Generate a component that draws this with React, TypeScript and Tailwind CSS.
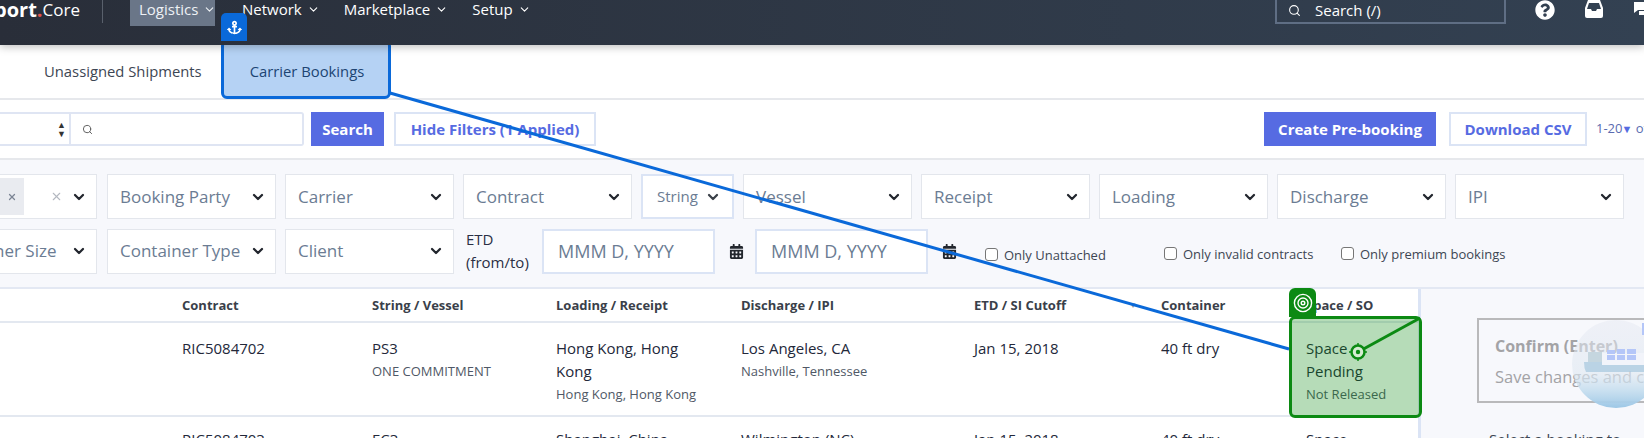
import { ChevronDown, Search, X } from "lucide-react";
import { FaAnchor, FaCalendarAlt, FaQuestionCircle } from "react-icons/fa";

const nav = ["Network", "Marketplace", "Setup"];
const row1 = ["Carrier", "Contract"];
const row1b = ["Vessel", "Receipt", "Loading", "Discharge"];
const cols = "grid grid-cols-[182px_190px_184px_185px_233px_187px_145px_1fr]";

function Select({ label, className = "w-[169px]" }: { label: string; className?: string }) {
  return (
    <div className={`flex h-[45px] shrink-0 items-center justify-between border border-[#e3e6ec] bg-white pl-[12px] pr-[9px] ${className}`}>
      <span className="whitespace-nowrap text-[17px] text-[#6b7c93]">{label}</span>
      <ChevronDown size={16} strokeWidth={3.4} className="shrink-0 text-[#22262e]" />
    </div>
  );
}

function Check({ label, className }: { label: string; className: string }) {
  return (
    <label className={`flex shrink-0 items-center gap-[6px] text-[13px] text-[#3d4653] ${className}`}>
      <span className="-mt-[3px] h-[13px] w-[13px] rounded-[3px] border border-[#767676] bg-white" />
      {label}
    </label>
  );
}

function DateField() {
  return (
    <div className="flex h-[45px] w-[173px] shrink-0 items-center border-2 border-[#dbe4f5] bg-white pl-[14px] text-[18px] text-[#6b7c93]">
      MMM D, YYYY
    </div>
  );
}

export default function App() {
  return (
    <div className="relative h-[438px] w-[1644px] overflow-hidden bg-white font-['Open_Sans',sans-serif]">
      {/* top bar */}
      <header className="relative z-10 flex h-[45px] items-start bg-gradient-to-r from-[#292e39] to-[#334152] shadow-[0_2px_8px_rgba(0,0,0,0.25)]">
        <div className="flex h-[20px] w-[80px] items-center justify-end overflow-hidden whitespace-nowrap text-[17px] text-white">
          <span className="text-[20px] font-bold">Transport</span>
          <span className="text-[20px] font-bold text-[#e5534b]">.</span>
          <span>Core</span>
        </div>
        <div className="ml-[22px] h-[23px] w-px bg-[#59606c]" />
        <div className="ml-[27px] flex h-[26px] w-[85px] gap-[5px] bg-[#6a7688] pl-[9px] text-[15px] leading-[18px] text-[#eef1f5]">
          Logistics <ChevronDown size={13} className="mt-[3px] shrink-0" />
        </div>
        <nav className="ml-[27px] flex h-[18px] items-center gap-[24px] text-[15px] text-white">
          {nav.map((n) => (
            <span key={n} className="flex items-center gap-[5px]">
              {n} <ChevronDown size={13} />
            </span>
          ))}
        </nav>
        <div className="ml-auto flex h-[24px] w-[231px] items-center gap-[14px] border-x-2 border-b-2 border-[#5f6e84] pb-[2px] pl-[11px] text-[15px] text-white">
          <Search size={13} />
          Search (/)
        </div>
        <div className="-mr-[9px] ml-[29px] flex h-[19px] items-center gap-[30px] text-white">
          <FaQuestionCircle size={20} />
          <svg width="18" height="18" viewBox="0 0 18 18" className="-mt-[2px]">
            <path d="M3 0h12l3 8v8a2 2 0 0 1-2 2H2a2 2 0 0 1-2-2V8z" fill="white" />
            <path d="M4 3h10l2 6h-4l-1 2H7L6 9H2z" fill="#334152" />
          </svg>
          <svg width="20" height="18" viewBox="0 0 20 18" className="-mt-[2px]">
            <path d="M1 2h13v8H5l-4 3z" fill="white" />
            <path d="M6 11h9V6h5v9H6z" fill="white" />
          </svg>
        </div>
      </header>

      {/* tabs */}
      <div className="flex h-[55px] items-center border-b-2 border-[#e6e8ec] pl-[44px] text-[14.8px] text-[#3d4653]">
        <span>Unassigned Shipments</span>
        <span className="ml-[48px] text-[#2a3446]">Carrier Bookings</span>
      </div>

      {/* toolbar */}
      <div className="flex h-[60px] items-center border-b-2 border-[#e6e8ec] text-[15px]">
        <div className="flex h-[34px] w-[304px] items-center rounded-r-[3px] border-2 border-l-0 border-[#dfe5f3]">
          <div className="flex w-[71px] justify-end border-r-2 border-[#dfe5f3] pr-[3px] text-[9px] leading-[9px] text-[#333]">
            <span className="flex h-[30px] flex-col justify-center">
              <span>▲</span>
              <span>▼</span>
            </span>
          </div>
          <Search size={11} className="ml-[11px] text-[#555]" />
        </div>
        <button className="ml-[7px] h-[34px] w-[73px] bg-[#566be2] font-bold text-white">Search</button>
        <button className="ml-[10px] h-[34px] w-[202px] border-2 border-[#dbe4f5] font-bold text-[#566be2]">
          Hide Filters (1 Applied)
        </button>
        <button className="ml-auto h-[34px] w-[172px] bg-[#566be2] font-bold text-white">Create Pre-booking</button>
        <button className="ml-[13px] h-[34px] w-[138px] border-2 border-[#dbe4f5] font-bold text-[#566be2]">
          Download CSV
        </button>
        <span className="ml-[9px] w-[48px] shrink-0 whitespace-nowrap text-[13px] text-[#5a6bb0]">
          1-20<span className="-ml-[1px] text-[11px] text-[#566be2]">▼</span> of
        </span>
      </div>

      {/* filters */}
      <div className="flex h-[129px] flex-col gap-[9px] border-b-2 border-[#e3e8f3] bg-[#f7f8fc] pt-[14px]">
        <div className="flex gap-[9px]">
          <div className="relative mr-[1px] flex h-[45px] w-[97px] shrink-0 items-center justify-end gap-[8px] border border-l-0 border-[#e3e6ec] bg-white pr-[9px]">
            <span className="absolute left-0 top-[3px] flex h-[37px] w-[24px] items-center justify-center bg-[#e9ebf0] text-[#7b8494]">
              <X size={10} strokeWidth={3} />
            </span>
            <X size={13} className="text-[#b4b8c0]" />
            <ChevronDown size={16} strokeWidth={3.4} className="text-[#22262e]" />
          </div>
          <Select label="Booking Party" />
          {row1.map((l) => (
            <Select key={l} label={l} />
          ))}
          <div className="flex h-[45px] w-[93px] shrink-0 items-center justify-between border-2 border-[#dbe4f5] bg-white pl-[14px] pr-[11px]">
            <span className="text-[15px] text-[#6b7c93]">String</span>
            <ChevronDown size={16} strokeWidth={3.4} className="text-[#3a4048]" />
          </div>
          {row1b.map((l) => (
            <Select key={l} label={l} />
          ))}
          <Select label="IPI" />
        </div>
        <div className="flex items-center">
          <div className="flex h-[45px] w-[97px] shrink-0 items-center justify-between overflow-hidden border border-l-0 border-[#e3e6ec] bg-white pr-[9px]">
            <span className="-ml-[6px] whitespace-nowrap text-[17px] text-[#6b7c93]">ner Size</span>
            <ChevronDown size={16} strokeWidth={3.4} className="text-[#22262e]" />
          </div>
          <Select label="Container Type" className="ml-[10px] w-[169px]" />
          <Select label="Client" className="ml-[9px] w-[169px]" />
          <div className="ml-[12px] w-[76px] shrink-0 text-[15px] leading-[23px] text-[#2a2f45]">
            ETD
            <br />
            (from/to)
          </div>
          <DateField />
          <FaCalendarAlt size={15} className="ml-[14px] shrink-0 text-[#23272e]" />
          <div className="ml-[11px]">
            <DateField />
          </div>
          <FaCalendarAlt size={15} className="ml-[14px] shrink-0 text-[#23272e]" />
          <Check label="Only Unattached" className="ml-[28px] mt-[9px] w-[179px]" />
          <Check label="Only invalid contracts" className="mt-[7px] w-[177px]" />
          <Check label="Only premium bookings" className="mt-[7px]" />
        </div>
      </div>

      {/* table */}
      <div className="flex">
        <div className="w-[1418px] shrink-0">
          <div className={`${cols} h-[34px] items-center border-b-2 border-[#e3e8f0] pt-[1px] text-[13px] font-bold text-[#3a3f4a]`}>
            <span />
            <span>Contract</span>
            <span>String / Vessel</span>
            <span>Loading / Receipt</span>
            <span>Discharge / IPI</span>
            <span className="relative">
              ETD / SI Cutoff
              <span className="absolute left-[155px] top-[3px] text-[8px] text-[#8a8f99]">▼</span>
            </span>
            <span>Container</span>
            <span>Space / SO</span>
          </div>
          <div className={`${cols} h-[94px] border-b-2 border-[#e3e8f0] pt-[14px] text-[15px] leading-[23px] text-[#23283a]`}>
            <span />
            <span>RIC5084702</span>
            <div>
              PS3
              <div className="text-[13px] text-[#4f5866]">ONE COMMITMENT</div>
            </div>
            <div className="pr-[30px]">
              Hong Kong, Hong Kong
              <div className="whitespace-nowrap text-[13px] text-[#4f5866]">Hong Kong, Hong Kong</div>
            </div>
            <div>
              Los Angeles, CA
              <div className="text-[13px] text-[#4f5866]">Nashville, Tennessee</div>
            </div>
            <span>Jan 15, 2018</span>
            <span>40 ft dry</span>
            <div className="pr-[30px]">
              Space Pending
              <div className="whitespace-nowrap text-[13px] text-[#4f5866]">Not Released</div>
            </div>
          </div>
          <div className={`${cols} pt-[11px] text-[15px] leading-[23px] text-[#23283a]`}>
            <span />
            <span>RIC5084703</span>
            <span>EC3</span>
            <span>Shanghai, China</span>
            <span>Wilmington (NC)</span>
            <span>Jan 15, 2018</span>
            <span>40 ft dry</span>
            <span>Space</span>
          </div>
        </div>
        <aside className="h-[150px] flex-1 border-l-[3px] border-[#dbe4f5] bg-[#f7f8fc] pl-[56px] pt-[29px]">
          <div className="h-[85px] w-[200px] whitespace-nowrap border-2 border-[#b9b9bb] px-[16px] pt-[14px] text-[#a3a3a6]">
            <div className="text-[16px] font-bold">Confirm (Enter)</div>
            <div className="mt-[7px] text-[16.5px]">Save changes and c</div>
          </div>
          <div className="mt-[25px] whitespace-nowrap pl-[12px] text-[15px] text-[#3d4653]">Select a booking to</div>
        </aside>
      </div>

      {/* annotation overlay */}
      <div className="absolute left-[221px] top-[40px] h-[59px] w-[170px] rounded-[6px] border-[3px] border-[#0a69d9] bg-[#0a69d9]/30" />
      <div className="absolute left-[221px] top-[13px] z-20 flex h-[28px] w-[26px] items-center justify-center rounded-t-[5px] bg-[#0a69d9] text-white">
        <FaAnchor size={15} />
      </div>
      <div className="absolute left-[1289px] top-[316px] h-[102px] w-[133px] rounded-[6px] border-[3px] border-[#0c8a13] bg-[#0c8a13]/30" />
      <div className="absolute left-[1289px] top-[288px] flex h-[29px] w-[27px] items-center justify-center rounded-t-[6px] bg-[#0c8a13]">
        <svg width="20" height="20" viewBox="0 0 20 20" fill="none" stroke="white" strokeWidth="1.4">
          <circle cx="10" cy="10" r="8.6" />
          <circle cx="10" cy="10" r="5" />
          <circle cx="10" cy="10" r="1.8" />
        </svg>
      </div>
      <svg className="pointer-events-none absolute left-0 top-0" width="1644" height="438" fill="none">
        <line x1="390" y1="93" x2="1289" y2="349" stroke="#0a69d9" strokeWidth="3" />
        <line x1="1358" y1="352" x2="1420" y2="318" stroke="#0c8a13" strokeWidth="3" />
        <circle cx="1358" cy="352" r="6.5" fill="#d6ecd2" stroke="#0c8a13" strokeWidth="2.5" />
        <circle cx="1358" cy="352" r="2.2" fill="#0c8a13" />
        <path d="M1358 343v2M1358 359v2M1349 352h2M1365 352h2" stroke="#0c8a13" strokeWidth="1.5" />
      </svg>

      {/* ship badge */}
      <svg className="absolute left-[1572px] top-[320px]" width="72" height="88" viewBox="0 0 72 88">
        <defs>
          <linearGradient id="sea" x1="0" y1="0" x2="0" y2="1">
            <stop offset="0" stopColor="#e6e9f2" stopOpacity="0.5" />
            <stop offset="0.6" stopColor="#dfe8f1" stopOpacity="0.6" />
            <stop offset="0.8" stopColor="#c2dcee" stopOpacity="0.85" />
            <stop offset="1" stopColor="#9cc7e6" />
          </linearGradient>
        </defs>
        <circle cx="44" cy="44" r="44" fill="url(#sea)" />
        <path d="M16 32h14v10H16z" fill="#bcd0da" fillOpacity="0.8" />
        <path d="M30 33h42v12H30z" fill="#f4f6fb" fillOpacity="0.75" />
        <path d="M12 42h18v3h42v7H14q-2-4-2-10z" fill="#a9c9df" fillOpacity="0.75" />
        <path d="M35 30h8v4h-8zM45 29h8v5h-8zM55 29h9v5h-9zM35 35h8v5h-8zM45 35h8v5h-8zM55 35h9v5h-9z" fill="#b4c6f8" />
        <path d="M70 3h2v12h-2z" fill="#b4c6f8" />
      </svg>
    </div>
  );
}
